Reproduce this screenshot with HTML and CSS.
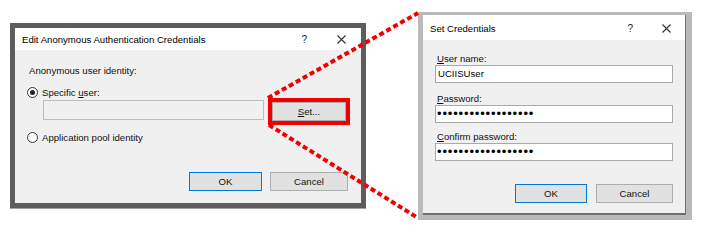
FILE: index.html
```html
<!DOCTYPE html>
<html>
<head>
<meta charset="utf-8">
<link rel="stylesheet" href="styles.css">
</head>
<body>
<div class="stage">
  <div class="dlg-a">
    <div class="titlebar ta">
      <span class="ttext">Edit Anonymous Authentication Credentials</span>
      <span class="tools"><span class="help">?</span><svg class="xico" width="9" height="9" viewBox="0 0 9 9"><path d="M0.5 0.5L8.5 8.5M8.5 0.5L0.5 8.5" stroke="#333" stroke-width="1.1"/></svg></span>
    </div>
    <div class="body-a">
      <div class="lbl">Anonymous user identity:</div>
      <div class="radio-row r1"><span class="radio on"></span><span>Specific <u>u</u>ser:</span></div>
      <div class="user-row">
        <div class="tb dis"></div>
        <div class="hilite"><div class="btn set"><u>S</u>et...</div></div>
      </div>
      <div class="radio-row r2"><span class="radio"></span><span>Application pool identity</span></div>
      <div class="btns btns-a">
        <div class="btn ok w73">OK</div>
        <div class="btn w78">Cancel</div>
      </div>
    </div>
  </div>
  <div class="dlg-b">
    <div class="win">
      <div class="titlebar tb2">
        <span class="ttext">Set Credentials</span>
        <span class="tools"><span class="help">?</span><svg class="xico" width="9" height="9" viewBox="0 0 9 9"><path d="M0.5 0.5L8.5 8.5M8.5 0.5L0.5 8.5" stroke="#333" stroke-width="1.1"/></svg></span>
      </div>
      <div class="body-b">
        <div class="grp g1">
          <div class="flbl"><u>U</u>ser name:</div>
          <div class="tb wide">UCIISUser</div>
        </div>
        <div class="grp g2">
          <div class="flbl"><u>P</u>assword:</div>
          <div class="tb wide pw">••••••••••••••••••</div>
        </div>
        <div class="grp g3">
          <div class="flbl"><u>C</u>onfirm password:</div>
          <div class="tb wide pw">••••••••••••••••••</div>
        </div>
        <div class="btns btns-b">
          <div class="btn ok w72">OK</div>
          <div class="btn w77">Cancel</div>
        </div>
      </div>
    </div>
  </div>
</div>
<svg class="callout" width="702" height="235" viewBox="0 0 702 235">
  <line x1="268" y1="98" x2="418" y2="13" stroke="#f00000" stroke-width="4" stroke-dasharray="5 3"/>
  <line x1="269" y1="125" x2="418" y2="218" stroke="#f00000" stroke-width="4" stroke-dasharray="5 3"/>
</svg>
</body>
</html>
```
FILE: styles.css
```css
html, body {
  margin: 0;
  padding: 0;
  background: #ffffff;
}
body {
  position: relative;
  width: 702px;
  height: 235px;
  overflow: hidden;
  font-family: "Liberation Sans", Arial, sans-serif;
  font-size: 9.6px;
  color: #111;
}
.stage {
  display: flex;
  align-items: flex-start;
  padding-left: 10px;
  gap: 52px;
}
.dlg-a {
  margin-top: 23px;
  width: 356px;
  height: 185px;
  box-sizing: border-box;
  border: 5px solid #5d5d5d;
  box-shadow: 0 1px 0 #a0a0a0;
  display: flex;
  flex-direction: column;
  background: #f0f0f0;
}
.titlebar {
  background: #ffffff;
  display: flex;
  align-items: center;
  justify-content: space-between;
  color: #000;
}
.ta {
  height: 22px;
  padding: 1px 15px 0 7px;
  box-sizing: border-box;
}
.tools {
  display: flex;
  align-items: center;
}
.help {
  font-size: 10px;
  color: #222;
}
.ta .tools { gap: 30px; }
.xico { display: block; }
.body-a {
  flex: 1;
  display: flex;
  flex-direction: column;
  padding-left: 12px;
}
.lbl {
  margin-top: 15px;
  margin-left: 2px;
  line-height: 12px;
}
.radio-row {
  display: flex;
  align-items: center;
  gap: 4px;
  height: 12px;
}
.r1 { margin-top: 9px; }
.r2 { margin-top: 6px; }
.radio {
  width: 11px;
  height: 11px;
  box-sizing: border-box;
  border: 1px solid #333;
  border-radius: 50%;
  background: #fff;
  display: flex;
  align-items: center;
  justify-content: center;
}
.radio.on::after {
  content: "";
  width: 5px;
  height: 5px;
  border-radius: 50%;
  background: #222;
}
.user-row {
  display: flex;
  align-items: flex-start;
  padding-left: 16px;
  gap: 4px;
}
.tb {
  box-sizing: border-box;
  border: 1px solid #a9a9a9;
  background: #fff;
  height: 18px;
  line-height: 16px;
  padding-left: 2px;
  color: #000;
}
.tb.dis {
  margin-top: 2px;
  width: 221px;
  height: 20px;
  background: #f0f0f0;
  border-color: #bdbdbd;
}
.hilite {
  border: 4px solid #f00000;
  width: 82px;
  height: 27px;
  box-sizing: border-box;
}
.btn {
  box-sizing: border-box;
  background: #e1e1e1;
  border: 1px solid #adadad;
  display: flex;
  align-items: center;
  justify-content: center;
  height: 19px;
  color: #111;
}
.btn.set {
  width: 74px;
  height: 19px;
}
.btn.ok {
  border-color: #0078d7;
}
.btns {
  display: flex;
  justify-content: flex-end;
}
.btns-a {
  margin-top: 29px;
  padding-right: 13px;
  gap: 8px;
}
.w73 { width: 73px; }
.w78 { width: 78px; }
.w72 { width: 72px; }
.w77 { width: 77px; }

.dlg-b {
  margin-top: 12px;
  width: 274px;
  height: 208px;
  box-sizing: border-box;
  background: #bababa;
  padding: 3px 6px 5px 5px;
}
.win {
  height: 100%;
  box-sizing: border-box;
  border-right: 1px solid #6e6e6e;
  border-bottom: 2px solid #6e6e6e;
  background: #f0f0f0;
  display: flex;
  flex-direction: column;
}
.tb2 {
  height: 25px;
  padding: 1px 14px 0 7px;
  box-sizing: border-box;
}
.tb2 .tools { gap: 29px; }
.body-b {
  flex: 1;
  display: flex;
  flex-direction: column;
  padding-left: 12px;
  padding-right: 12px;
}
.grp.g1 { margin-top: 12px; }
.grp.g2 { margin-top: 9px; }
.grp.g3 { margin-top: 7px; }
.flbl {
  height: 13px;
  line-height: 13px;
  padding-left: 2px;
}
.tb.wide {
  width: 238px;
}
.tb.pw {
  font-size: 13px;
  letter-spacing: 0.85px;
  color: #000;
  padding-left: 1px;
}
.btns-b {
  margin-top: 23px;
  gap: 9px;
}
.callout {
  position: absolute;
  left: 0;
  top: 0;
  pointer-events: none;
}
```
